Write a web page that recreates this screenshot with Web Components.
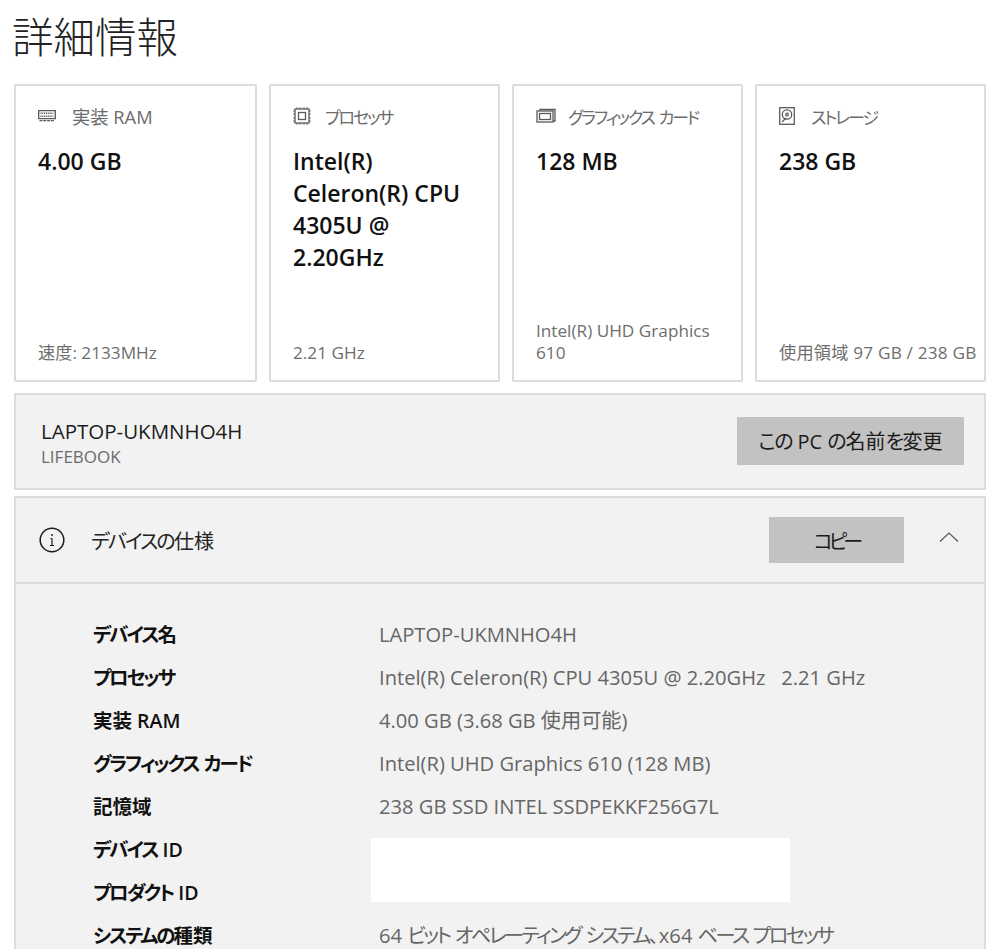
<!DOCTYPE html>
<html lang="ja">
<head>
<meta charset="utf-8">
<title>詳細情報</title>
<style>
html, body { margin: 0; height: 949px; overflow: hidden; background: #fff; }
body { font-family: "Open Sans", "Noto Sans CJK JP", sans-serif; color: #111; font-feature-settings: "palt"; }
</style>
</head>
<body>
<about-page></about-page>

<template id="spec-card-tpl">
  <style>
    :host { display: flex; flex-direction: column; box-sizing: border-box; height: 298px; background: #fff; border: 2px solid #dcdcdc; border-radius: 2px; padding: 18px 6px 16px 22px; }
    .head { display: flex; align-items: center; gap: 12px; height: 24px; font-size: 18.300px; color: #6b6b6b; white-space: nowrap; }
    .icon { width: 20px; height: 20px; display: flex; align-items: center; flex: none; }
    .value { margin-top: 17px; font-size: 23px; line-height: 32px; font-weight: 600; color: #111; flex: 1; }
    .foot { font-size: 17.200px; line-height: 22px; color: #6e6e6e; }
  </style>
  <div class="head"><span class="icon"><slot name="icon"></slot></span><slot name="title"></slot></div>
  <div class="value"><slot name="value"></slot></div>
  <div class="foot"><slot name="foot"></slot></div>
</template>

<template id="spec-row-tpl">
  <style>
    :host { display: grid; grid-template-columns: 286px 1fr; height: 43px; align-items: center; font-size: 20.150px; white-space: nowrap; }
    .k { font-weight: 600; color: #111; font-size: 19.500px; }
    .v { color: #666; }
  </style>
  <div class="k"><slot name="k"></slot></div>
  <div class="v"><slot name="v"></slot></div>
</template>

<script>
// kana in the reference font is much narrower than in Noto, so tighten only those runs
const kana = (text, cls) => text.replace(/[\u3041-\u30ff]+/g, m => `<span class="${cls}">${m}</span>`);

class SpecCard extends HTMLElement {
  constructor() {
    super();
    this.attachShadow({ mode: 'open' });
    this.shadowRoot.appendChild(document.getElementById('spec-card-tpl').content.cloneNode(true));
  }
}
customElements.define('spec-card', SpecCard);

class SpecRow extends HTMLElement {
  constructor() {
    super();
    this.attachShadow({ mode: 'open' });
    this.shadowRoot.appendChild(document.getElementById('spec-row-tpl').content.cloneNode(true));
  }
}
customElements.define('spec-row', SpecRow);

class AboutPage extends HTMLElement {
  constructor() {
    super();
    this.attachShadow({ mode: 'open' });
  }

  connectedCallback() {
    const stroke = 'fill="none" stroke="#5a5a5a" stroke-width="1.3"';
    const rows = [
      ['デバイス名', 'LAPTOP-UKMNHO4H'],
      ['プロセッサ', 'Intel(R) Celeron(R) CPU 4305U @ 2.20GHz&nbsp;&nbsp; 2.21 GHz'],
      ['実装 RAM', '4.00 GB (3.68 GB 使用可能)'],
      ['グラフィックス カード', 'Intel(R) UHD Graphics 610 (128 MB)'],
      ['記憶域', '238 GB SSD INTEL SSDPEKKF256G7L'],
      ['デバイス ID', ''],
      ['プロダクト ID', ''],
      ['システムの種類', '64 ビット オペレーティング システム、x64 ベース プロセッサ']
    ];
    this.shadowRoot.innerHTML = `
      <style>
        :host { display: block; padding: 0 9px 0 14px; }
        h1 { margin: 0 0 0 -2px; height: 84px; font-size: 41.500px; line-height: 75px; font-weight: 300; color: #222; }
        .cards { display: grid; grid-template-columns: 243px repeat(3, 231px); gap: 12px; }
        .panel { background: #f2f2f2; border: 2px solid #dcdcdc; box-sizing: border-box; }
        .name { margin-top: 11px; height: 97px; display: flex; align-items: center; justify-content: space-between; padding: 0 20px 2px 25px; }
        .name b { display: block; font-weight: 400; font-size: 20.500px; line-height: 26px; color: #1c1c1c; padding-top: 5px; }
        .name small { display: block; font-size: 17px; line-height: 25px; color: #6b6b6b; }
        button { font: inherit; font-feature-settings: inherit; border: 0; border-radius: 0; background: #c2c2c2; color: #1c1c1c; font-size: 20px; padding: 0; }
        .rename { width: 227px; height: 48px; }
        .spec { margin-top: 6px; height: 470px; }
        .spec-head { height: 84px; display: flex; align-items: center; border-bottom: 2px solid #dcdcdc; padding: 0 24px 0 23px; }
        .spec-head > span { margin-left: 26px; font-size: 20px; color: #222; flex: 1; }
        .copy { width: 135px; height: 46px; margin-right: 35px; letter-spacing: -4px; }
        .rows { position: relative; padding: 28px 0 0 77px; }
        .mask { position: absolute; left: 355px; top: 254px; width: 419px; height: 64px; background: #fff; }
        .kr { letter-spacing: -2.100px; }
        .kv { letter-spacing: -2.500px; }
        .kt { font-size: 17px; letter-spacing: -2.100px; }
        .kb { letter-spacing: -1.300px; }
        .kh { letter-spacing: -1.800px; }
        .ram { margin-left: 2px; }
        .wide { white-space: nowrap; letter-spacing: .2px; }
      </style>
      <h1>詳細情報</h1>
      <div class="cards">
        <spec-card>
          <svg slot="icon" width="18" height="12" viewBox="0 0 18 12" ${stroke}><path d="M.7.7h16.600v8H.7z"/><path d="M2.500 3.200h13M2.500 6.200h13" stroke-width="1.500" stroke-dasharray="1.100 .7"/><path d="M1.500 10.700h15" stroke-dasharray="3 .8"/></svg>
          <span slot="title" class="ram">${kana('実装 RAM', 'kt')}</span>
          <span slot="value">4.00 GB</span>
          <span slot="foot">速度: 2133MHz</span>
        </spec-card>
        <spec-card>
          <svg slot="icon" width="18" height="18" viewBox="0 0 18 18" ${stroke}><rect x="2" y="2" width="14" height="14"/><rect x="5.500" y="5.500" width="7" height="7"/><path d="M4 0v2M7 0v2M11 0v2M14 0v2M4 16v2M7 16v2M11 16v2M14 16v2M0 4h2M0 7h2M0 11h2M0 14h2M16 4h2M16 7h2M16 11h2M16 14h2" stroke-width=".8"/></svg>
          <span slot="title">${kana('プロセッサ', 'kt')}</span>
          <span slot="value">Intel(R)<br>Celeron(R) CPU<br>4305U @<br>2.20GHz</span>
          <span slot="foot">2.21 GHz</span>
        </spec-card>
        <spec-card>
          <svg slot="icon" width="20" height="16" viewBox="0 0 20 16" ${stroke}><path d="M4 3V1.500h15V13h-2"/><rect x="1" y="3" width="16" height="11"/><rect x="3.500" y="5.500" width="11" height="6"/></svg>
          <span slot="title">${kana('グラフィックス カード', 'kt')}</span>
          <span slot="value">128 MB</span>
          <span slot="foot">Intel(R) UHD Graphics<br>610</span>
        </spec-card>
        <spec-card>
          <svg slot="icon" width="16" height="18" viewBox="0 0 16 18" ${stroke}><rect x=".7" y=".7" width="14.600" height="16.600"/><circle cx="8" cy="7.500" r="4.700"/><circle cx="8" cy="7.500" r="1.300"/><path d="M3 15l4-4"/></svg>
          <span slot="title">${kana('ストレージ', 'kt')}</span>
          <span slot="value">238 GB</span>
          <span slot="foot" class="wide">使用領域 97 GB / 238 GB</span>
        </spec-card>
      </div>
      <section class="panel name">
        <div><b>LAPTOP-UKMNHO4H</b><small>LIFEBOOK</small></div>
        <button class="rename">${kana('この PC の名前を変更', 'kb')}</button>
      </section>
      <section class="panel spec">
        <div class="spec-head">
          <svg width="26" height="26" viewBox="0 0 26 26" fill="none" stroke="#1c1c1c" stroke-width="1.500"><circle cx="13" cy="13" r="11.800"/><path d="M13 11.500v7M11 18.500h4M11.500 11.500H13" stroke-width="1.200"/><circle cx="13" cy="8" r=".9" fill="#1c1c1c" stroke="none"/></svg>
          <span>${kana('デバイスの仕様', 'kh')}</span>
          <button class="copy">コピー</button>
          <svg width="20" height="12" viewBox="0 0 20 12" fill="none" stroke="#555" stroke-width="1.200" style="margin-right:1px;margin-top:-6px"><path d="M1 10.500 10 2l9 8.500"/></svg>
        </div>
        <div class="rows">
          ${rows.map(([k, v]) => `<spec-row><span slot="k">${kana(k, 'kr')}</span><span slot="v">${kana(v, 'kv')}</span></spec-row>`).join('')}
          <div class="mask"></div>
        </div>
      </section>
    `;
  }
}
customElements.define('about-page', AboutPage);
</script>
</body>
</html>
